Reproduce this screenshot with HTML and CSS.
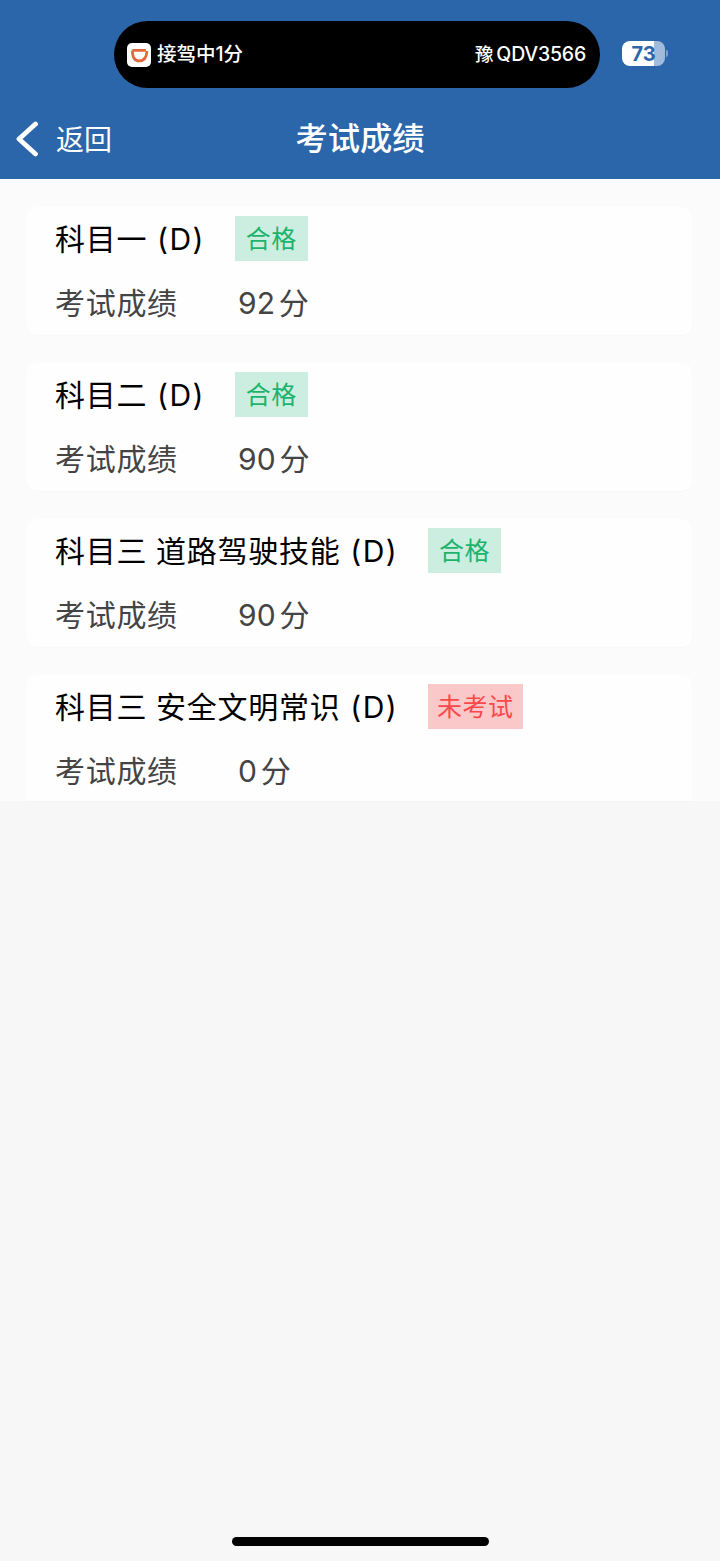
FILE: index.html
```html
<!doctype html>
<html lang="zh-CN">
<head>
	<meta charset="UTF-8">
	<meta name="viewport" content="width=device-width, initial-scale=1">
	<title>考试成绩</title>
	<link rel="stylesheet" href="styles.css">
</head>
<body>
	<header class="header">
		<div class="status">
			<div class="island">
				<svg class="logo" viewBox="0 0 24 24">
					<rect width="24" height="24" rx="5" fill="#fff"/>
					<path d="M5.4 7.4H17.6V8.6M20 7.8C19.6 14.2 17 17.9 12.3 17.9C7.8 17.9 5.4 14.6 5.4 7.4" fill="none" stroke="#e2683c" stroke-width="2.7"/>
				</svg>
				<span class="trip">接驾中1分</span>
				<span class="plate"><span>豫</span>QDV3566</span>
			</div>
			<div class="battery">
				<div class="level">73</div>
				<div class="cap"></div>
			</div>
		</div>
		<div class="navbar">
			<a class="back">
				<svg class="arrow" viewBox="0 0 22 36">
					<path d="M19.5 3L3 18L19.5 33" fill="none" stroke="#fff" stroke-width="4.8" stroke-linecap="round" stroke-linejoin="round"/>
				</svg>
				<span>返回</span>
			</a>
			<h1 class="title">考试成绩</h1>
		</div>
	</header>
	<main class="list">
		<section class="card">
			<div class="row subject"><h2>科目一 <span class="type">(D)</span></h2><span class="tag pass">合格</span></div>
			<div class="row score"><span class="label">考试成绩</span><span><span class="num">92</span>分</span></div>
		</section>
		<section class="card">
			<div class="row subject"><h2>科目二 <span class="type">(D)</span></h2><span class="tag pass">合格</span></div>
			<div class="row score"><span class="label">考试成绩</span><span><span class="num">90</span>分</span></div>
		</section>
		<section class="card">
			<div class="row subject"><h2>科目三 道路驾驶技能 <span class="type">(D)</span></h2><span class="tag pass">合格</span></div>
			<div class="row score"><span class="label">考试成绩</span><span><span class="num">90</span>分</span></div>
		</section>
		<section class="card">
			<div class="row subject"><h2>科目三 安全文明常识 <span class="type">(D)</span></h2><span class="tag none">未考试</span></div>
			<div class="row score"><span class="label">考试成绩</span><span><span class="num">0</span>分</span></div>
		</section>
	</main>
	<footer class="home"><div class="bar"></div></footer>
</body>
</html>
```
FILE: styles.css
```css
*{
	padding: 0;
	margin: 0;
	box-sizing: border-box;
}
body{
	display: flex;
	flex-direction: column;
	width: 720px;
	height: 1561px;
	background-color: #f7f7f7;
	font-family: Inter, "Noto Sans CJK SC", sans-serif;
	overflow: hidden;
}
/*---------------------header---------------------*/
.header{
	height: 179px;
	background-color: #2c66aa;
	color: #fff;
}
.status{
	display: flex;
	padding: 21px 0 0 114px;
	height: 100px;
}
.island{
	display: flex;
	align-items: center;
	width: 486px;
	height: 67px;
	padding: 0 14px 1px 13px;
	border-radius: 34px;
	background-color: #000;
	font-size: 19.5px;
	font-weight: 500;
	line-height: 30px;
}
.logo{
	width: 24px;
	height: 24px;
	margin: 1px 6px 0 0;
}
.plate{
	margin-left: auto;
	letter-spacing: -.2px;
}
.plate span{
	margin-right: 3px;
	font-size: 18.5px;
}
.battery{
	display: flex;
	align-items: center;
	height: 25px;
	margin: 20px 0 0 22px;
}
.level{
	width: 43px;
	height: 25px;
	border-radius: 8px;
	background: linear-gradient(to right, #fff 32px, #a0bbdc 32px);
	color: #2c66aa;
	font-size: 20px;
	font-weight: 700;
	line-height: 26px;
	text-align: center;
}
.cap{
	width: 2px;
	height: 7px;
	margin-left: 1px;
	border-radius: 0 3px 3px 0;
	background-color: #7fa3cf;
}
.navbar{
	display: grid;
	grid-template-columns: 1fr auto 1fr;
	align-items: center;
	height: 78px;
}
.back{
	display: flex;
	align-items: center;
	padding-left: 16px;
	font-size: 28px;
	line-height: 40px;
}
.back span{
	padding-top: 2px;
}
.arrow{
	width: 22px;
	height: 36px;
	margin-right: 18px;
}
.title{
	font-size: 32.3px;
	font-weight: 500;
	line-height: 46px;
}
/*---------------------score list---------------------*/
.list{
	display: flex;
	flex-direction: column;
	gap: 28px;
	height: 622px;
	padding: 28px 28px 0 27px;
	background-color: #fbfbfb;
}
.card{
	height: 128px;
	padding: 9px 28px 0;
	border-radius: 10px;
	background-color: #fefefe;
	box-shadow: 0 1px 2px rgba(0,0,0,.02);
}
.card:last-child{
	height: 126px;
	border-radius: 10px 10px 0 0;
}
.row{
	display: flex;
	align-items: center;
	font-size: 30px;
	letter-spacing: .7px;
}
.subject{
	height: 45px;
	color: #000;
}
.subject h2{
	font-size: 30px;
	font-weight: 400;
	line-height: 45px;
	padding-top: 2px;
	letter-spacing: .75px;
	word-spacing: -.4px;
}
.type{
	margin-left: 1px;
	letter-spacing: 1.4px;
}
.tag{
	height: 45px;
	margin-left: 30px;
	padding: 0 11px;
	font-size: 25px;
	line-height: 47px;
	letter-spacing: .5px;
}
.pass{
	background-color: #cceee0;
	color: #1cb36c;
}
.none{
	padding: 0 9px;
	background-color: #fbc8ca;
	color: #f9484c;
}
.score{
	height: 46px;
	margin-top: 17px;
	color: #444;
}
.label{
	width: 183px;
}
.num{
	margin-right: 3.5px;
	letter-spacing: .2px;
}
/*---------------------home indicator---------------------*/
.home{
	display: flex;
	justify-content: center;
	margin-top: auto;
	padding-bottom: 15px;
}
.bar{
	width: 257px;
	height: 9px;
	border-radius: 5px;
	background-color: #000;
}
```
